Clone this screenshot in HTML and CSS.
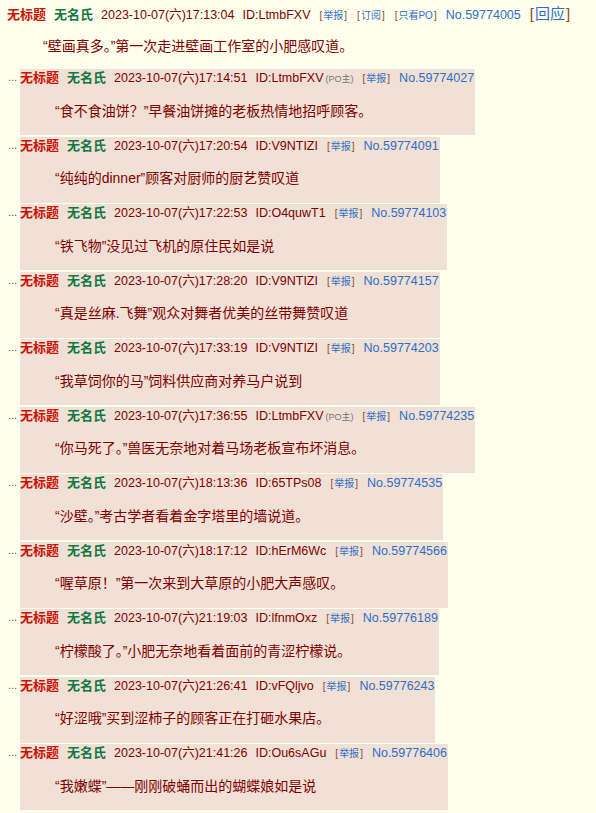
FILE: index.html
```html
<!DOCTYPE html>
<html lang="zh">
<head>
<meta charset="utf-8">
<link rel="stylesheet" href="styles.css">
</head>
<body>
<div class="thread">
  <div class="post main">
    <div class="head">
      <span class="title">无标题</span>
      <span class="name">无名氏</span>
      <span class="time">2023-10-07(六)17:13:04</span>
      <span class="uid">ID:LtmbFXV</span>
      <span class="sl"><b>[</b>举报<b>]</b></span>
      <span class="sl"><b>[</b>订阅<b>]</b></span>
      <span class="sl"><b>[</b>只看PO<b>]</b></span>
      <span class="no">No.59774005</span>
      <span class="reply-link"><b>[</b>回应<b>]</b></span>
    </div>
    <div class="content">“壁画真多。”第一次走进壁画工作室的小肥感叹道。</div>
  </div>

  <div class="row"><span class="dots">...</span><div class="box">
    <div class="head"><span class="title">无标题</span><span class="name">无名氏</span><span class="time">2023-10-07(六)17:14:51</span><span class="uid">ID:LtmbFXV<small class="po">(PO主)</small></span><span class="sl"><b>[</b>举报<b>]</b></span><span class="no">No.59774027</span></div>
    <div class="content">“食不食油饼？”早餐油饼摊的老板热情地招呼顾客。</div>
  </div></div>

  <div class="row"><span class="dots">...</span><div class="box">
    <div class="head"><span class="title">无标题</span><span class="name">无名氏</span><span class="time">2023-10-07(六)17:20:54</span><span class="uid">ID:V9NTIZI</span><span class="sl"><b>[</b>举报<b>]</b></span><span class="no">No.59774091</span></div>
    <div class="content">“纯纯的dinner”顾客对厨师的厨艺赞叹道</div>
  </div></div>

  <div class="row"><span class="dots">...</span><div class="box">
    <div class="head"><span class="title">无标题</span><span class="name">无名氏</span><span class="time">2023-10-07(六)17:22:53</span><span class="uid">ID:O4quwT1</span><span class="sl"><b>[</b>举报<b>]</b></span><span class="no">No.59774103</span></div>
    <div class="content">“铁飞物”没见过飞机的原住民如是说</div>
  </div></div>

  <div class="row"><span class="dots">...</span><div class="box">
    <div class="head"><span class="title">无标题</span><span class="name">无名氏</span><span class="time">2023-10-07(六)17:28:20</span><span class="uid">ID:V9NTIZI</span><span class="sl"><b>[</b>举报<b>]</b></span><span class="no">No.59774157</span></div>
    <div class="content">“真是丝麻.飞舞”观众对舞者优美的丝带舞赞叹道</div>
  </div></div>

  <div class="row"><span class="dots">...</span><div class="box">
    <div class="head"><span class="title">无标题</span><span class="name">无名氏</span><span class="time">2023-10-07(六)17:33:19</span><span class="uid">ID:V9NTIZI</span><span class="sl"><b>[</b>举报<b>]</b></span><span class="no">No.59774203</span></div>
    <div class="content">“我草饲你的马”饲料供应商对养马户说到</div>
  </div></div>

  <div class="row"><span class="dots">...</span><div class="box">
    <div class="head"><span class="title">无标题</span><span class="name">无名氏</span><span class="time">2023-10-07(六)17:36:55</span><span class="uid">ID:LtmbFXV<small class="po">(PO主)</small></span><span class="sl"><b>[</b>举报<b>]</b></span><span class="no">No.59774235</span></div>
    <div class="content">“你马死了。”兽医无奈地对着马场老板宣布坏消息。</div>
  </div></div>

  <div class="row"><span class="dots">...</span><div class="box">
    <div class="head"><span class="title">无标题</span><span class="name">无名氏</span><span class="time">2023-10-07(六)18:13:36</span><span class="uid">ID:65TPs08</span><span class="sl"><b>[</b>举报<b>]</b></span><span class="no">No.59774535</span></div>
    <div class="content">“沙壁。”考古学者看着金字塔里的墙说道。</div>
  </div></div>

  <div class="row"><span class="dots">...</span><div class="box">
    <div class="head"><span class="title">无标题</span><span class="name">无名氏</span><span class="time">2023-10-07(六)18:17:12</span><span class="uid">ID:hErM6Wc</span><span class="sl"><b>[</b>举报<b>]</b></span><span class="no">No.59774566</span></div>
    <div class="content">“喔草原！”第一次来到大草原的小肥大声感叹。</div>
  </div></div>

  <div class="row"><span class="dots">...</span><div class="box">
    <div class="head"><span class="title">无标题</span><span class="name">无名氏</span><span class="time">2023-10-07(六)21:19:03</span><span class="uid">ID:lfnmOxz</span><span class="sl"><b>[</b>举报<b>]</b></span><span class="no">No.59776189</span></div>
    <div class="content">“柠檬酸了。”小肥无奈地看着面前的青涩柠檬说。</div>
  </div></div>

  <div class="row"><span class="dots">...</span><div class="box">
    <div class="head"><span class="title">无标题</span><span class="name">无名氏</span><span class="time">2023-10-07(六)21:26:41</span><span class="uid">ID:vFQljvo</span><span class="sl"><b>[</b>举报<b>]</b></span><span class="no">No.59776243</span></div>
    <div class="content">“好涩哦”买到涩柿子的顾客正在打砸水果店。</div>
  </div></div>

  <div class="row"><span class="dots">...</span><div class="box">
    <div class="head"><span class="title">无标题</span><span class="name">无名氏</span><span class="time">2023-10-07(六)21:41:26</span><span class="uid">ID:Ou6sAGu</span><span class="sl"><b>[</b>举报<b>]</b></span><span class="no">No.59776406</span></div>
    <div class="content">“我嫩蝶”——刚刚破蛹而出的蝴蝶娘如是说</div>
  </div></div>
</div>
</body>
</html>
```

FILE: styles.css
```css
html, body {
  margin: 0;
  padding: 0;
  background: #ffffee;
}
body {
  font-family: "Liberation Sans", Arial, "Noto Sans CJK SC", sans-serif;
  color: #800000;
  font-size: 13px;
}
.thread {
  padding: 5px 0 0 7px;
}
.head {
  display: flex;
  align-items: baseline;
  gap: 8px;
  white-space: nowrap;
  height: 17px;
  line-height: 17px;
  font-size: 12.5px;
}
.title {
  color: #cc1105;
  font-weight: bold;
  font-size: 13px;
}
.name {
  color: #117743;
  font-weight: bold;
  font-size: 13px;
}
.time, .uid {
  color: #800000;
}
.po {
  font-size: 9px;
  color: #777;
  margin-left: 2px;
}
.sl {
  font-size: 10px;
  color: #2e6fc4;
}
.sl b, .reply-link b {
  font-weight: normal;
  color: #8b4a2b;
  margin: 0 1px;
}
.no {
  color: #2e6fc4;
}
.reply-link {
  font-size: 15px;
  color: #2e6fc4;
}
.content {
  font-size: 14px;
  height: 17px;
  line-height: 17px;
  margin-left: 36px;
  color: #800000;
  white-space: nowrap;
}
.main .content {
  margin-top: 16px;
  margin-bottom: 14px;
}
.row {
  display: flex;
  align-items: flex-start;
  margin-left: 1px;
  margin-bottom: 1.5px;
}
.dots {
  width: 12px;
  line-height: 17px;
  font-size: 11px;
  color: #555;
}
.box {
  background: #f0e0d6;
  padding: 0 1px 0 0;
}
.box .content {
  margin: 16.5px 0 15.5px 35px;
}
```
